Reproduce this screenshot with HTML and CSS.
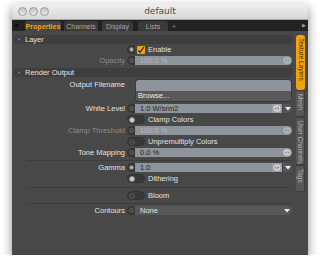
FILE: index.html
```html
<!DOCTYPE html>
<html lang="en">
<head>
    <meta charset="UTF-8">
    <title>default</title>
    <link rel="stylesheet" href="styles.css">
</head>
<body>
    <div class="window">
        <div class="titlebar">
            <div class="lights">
                <span class="light"></span>
                <span class="light"></span>
                <span class="light"></span>
            </div>
            <div class="title">default</div>
            <div></div>
        </div>

        <div class="tabbar">
            <span class="tab-arrow left">&#9664;</span>
            <span class="tab active t-props">Properties</span>
            <span class="tab t-chan">Channels</span>
            <span class="tab t-disp">Display</span>
            <span class="tab t-lists">Lists</span>
            <span class="tab-plus">+</span>
            <span class="tab-arrow right">&#9654;</span>
        </div>

        <div class="body">
            <div class="panel">
                <div class="section-head"><span class="tri">&#9660;</span>Layer</div>

                <div class="row">
                    <span class="label"></span>
                    <div class="ctl">
                        <span class="cap"><i class="dot"></i></span>
                        <span class="check">
                            <svg width="8" height="8" viewBox="0 0 8 8"><path d="M1.5 4.5 L3 6.3 L6.8 1.2" fill="none" stroke="#222" stroke-width="1.2"/></svg>
                        </span>
                        <span class="ctl-text">Enable</span>
                    </div>
                </div>

                <div class="row">
                    <span class="label dim">Opacity</span>
                    <div class="field">
                        <span class="cap"><i class="dot off"></i></span>
                        <span class="input dim">100.0 %</span>
                        <span class="spin"><svg width="8" height="7" viewBox="0 0 8 7"><ellipse cx="4" cy="3.5" rx="3.6" ry="3.2" fill="#b4bac0"/><path d="M3.4 1.5 L1.4 3.5 L3.4 5.5Z M4.6 1.5 L6.6 3.5 L4.6 5.5Z" fill="#8a9198"/></svg></span>
                    </div>
                </div>

                <div class="section-head gap"><span class="tri">&#9660;</span>Render Output</div>

                <div class="row file-row">
                    <span class="label">Output Filename</span>
                    <div class="file">
                        <span class="file-name"></span>
                        <span class="file-browse">Browse...</span>
                    </div>
                </div>

                <div class="row tight">
                    <span class="label">White Level</span>
                    <div class="field">
                        <span class="cap"><i class="dot off"></i></span>
                        <span class="input">1.0 W/srm2</span>
                        <span class="spin"><svg width="8" height="7" viewBox="0 0 8 7"><ellipse cx="4" cy="3.5" rx="3.6" ry="3.2" fill="#d4d8dc"/><path d="M3.4 1.5 L1.4 3.5 L3.4 5.5Z M4.6 1.5 L6.6 3.5 L4.6 5.5Z" fill="#8a9198"/></svg></span>
                        <span class="drop"><svg width="6" height="4" viewBox="0 0 6 4"><path d="M0 0 H6 L3 3.5Z" fill="#eee"/></svg></span>
                    </div>
                </div>

                <div class="row">
                    <span class="label"></span>
                    <div class="ctl">
                        <span class="toggle"><i class="knob on"></i></span>
                        <span class="ctl-text">Clamp Colors</span>
                    </div>
                </div>

                <div class="row">
                    <span class="label dim">Clamp Threshold</span>
                    <div class="field">
                        <span class="cap"><i class="dot off"></i></span>
                        <span class="input dim">100.0 %</span>
                        <span class="spin"><svg width="8" height="7" viewBox="0 0 8 7"><ellipse cx="4" cy="3.5" rx="3.6" ry="3.2" fill="#b4bac0"/><path d="M3.4 1.5 L1.4 3.5 L3.4 5.5Z M4.6 1.5 L6.6 3.5 L4.6 5.5Z" fill="#8a9198"/></svg></span>
                    </div>
                </div>

                <div class="row">
                    <span class="label"></span>
                    <div class="ctl">
                        <span class="toggle"><i class="knob"></i></span>
                        <span class="ctl-text">Unpremultiply Colors</span>
                    </div>
                </div>

                <div class="row">
                    <span class="label">Tone Mapping</span>
                    <div class="field">
                        <span class="cap"><i class="dot off"></i></span>
                        <span class="input">0.0 %</span>
                        <span class="spin"><svg width="8" height="7" viewBox="0 0 8 7"><ellipse cx="4" cy="3.5" rx="3.6" ry="3.2" fill="#d4d8dc"/><path d="M3.4 1.5 L1.4 3.5 L3.4 5.5Z M4.6 1.5 L6.6 3.5 L4.6 5.5Z" fill="#8a9198"/></svg></span>
                    </div>
                </div>

                <div class="sep"></div>

                <div class="row">
                    <span class="label">Gamma</span>
                    <div class="field">
                        <span class="cap"><i class="dot"></i></span>
                        <span class="input">1.0</span>
                        <span class="spin"><svg width="8" height="7" viewBox="0 0 8 7"><ellipse cx="4" cy="3.5" rx="3.6" ry="3.2" fill="#d4d8dc"/><path d="M3.4 1.5 L1.4 3.5 L3.4 5.5Z M4.6 1.5 L6.6 3.5 L4.6 5.5Z" fill="#8a9198"/></svg></span>
                        <span class="drop"><svg width="6" height="4" viewBox="0 0 6 4"><path d="M0 0 H6 L3 3.5Z" fill="#eee"/></svg></span>
                    </div>
                </div>

                <div class="row">
                    <span class="label"></span>
                    <div class="ctl">
                        <span class="toggle"><i class="knob on"></i></span>
                        <span class="ctl-text">Dithering</span>
                    </div>
                </div>

                <div class="sep wide"></div>

                <div class="row">
                    <span class="label"></span>
                    <div class="ctl">
                        <span class="toggle"><i class="knob"></i></span>
                        <span class="ctl-text">Bloom</span>
                    </div>
                </div>

                <div class="sep"></div>

                <div class="row">
                    <span class="label">Contours</span>
                    <div class="field">
                        <span class="cap"><i class="dot off"></i></span>
                        <span class="input dark">None</span>
                        <span class="drop dark"><svg width="6" height="4" viewBox="0 0 6 4"><path d="M0 0 H6 L3 3.5Z" fill="#eee"/></svg></span>
                    </div>
                </div>
            </div>

            <div class="side">
                <span class="vtab active texture">Texture Layers</span>
                <span class="vtab mesh">Mesh</span>
                <span class="vtab user">User Channels</span>
                <span class="vtab tags">Tags</span>
            </div>
        </div>
    </div>
</body>
</html>
```

FILE: styles.css
```css
:root {
    --panel: #484848;
    --head: #3e3e3e;
    --field: #8d949b;
    --orange: #f3a20d;
    --label: #e2e2e2;
    --dim: #8c8c8c;
}

* {
    margin: 0;
    padding: 0;
    box-sizing: border-box;
}

body {
    background: #ffffff;
    font-family: 'Liberation Sans', Arial, sans-serif;
    font-size: 7.5px;
    line-height: 1;
}

.window {
    margin: 4px 0 0 12px;
    width: 296px;
    height: 251px;
    display: flex;
    flex-direction: column;
    box-shadow: 0 4px 10px rgba(0,0,0,0.45);
}

/* title bar */
.titlebar {
    height: 16px;
    display: grid;
    grid-template-columns: 1fr auto 1fr;
    align-items: center;
    background: linear-gradient(#efefef, #d8d8d8);
    border-bottom: 1px solid #a8a8a8;
}

.lights {
    display: flex;
    gap: 2px;
    padding-left: 6px;
}

.light {
    width: 9px;
    height: 9px;
    border-radius: 50%;
    background: linear-gradient(#c4c4c4, #e8e8e8);
    border: 1px solid #9c9c9c;
}

.title {
    font-family: 'DejaVu Sans', sans-serif;
    font-size: 9px;
    color: #4a4a4a;
}

/* tab bar */
.tabbar {
    height: 11px;
    display: flex;
    align-items: flex-end;
    background: #222222;
    color: #a5a5a5;
    font-size: 7px;
}

.tab-arrow {
    font-size: 5px;
    align-self: center;
}

.tab-arrow.left {
    color: #050505;
    width: 13px;
    padding-left: 2px;
}

.tab-arrow.right {
    margin-left: auto;
    margin-right: 2px;
    color: #a0a0a0;
}

.tab {
    height: 10px;
    padding-top: 2px;
    text-align: center;
    white-space: nowrap;
    border-radius: 3px 3px 0 0;
    background: #3a3a3a;
}

.t-props { width: 36px; }
.t-chan { width: 34px; margin-left: 3px; }
.t-disp { width: 31px; margin-left: 4px; }
.t-lists { width: 30px; margin-left: 5px; }

.tab.active {
    color: var(--orange);
    font-weight: bold;
    background: #454545;
}

.tab-plus {
    padding: 0 0 1px 4px;
    color: #888;
}

/* body */
.body {
    flex: 1;
    display: flex;
    background: var(--panel);
}

.panel {
    flex: 1;
    padding: 4px 0 0 2px;
}

.section-head {
    height: 9px;
    display: flex;
    align-items: center;
    background: var(--head);
    border-radius: 3px;
    color: var(--label);
    font-size: 7.5px;
}

.section-head.gap {
    margin-top: 2px;
}

.tri {
    font-size: 4px;
    color: #8a8a8a;
    width: 11px;
    padding-left: 3px;
}

.row {
    height: 11px;
    display: grid;
    grid-template-columns: 111px 1fr;
    column-gap: 2px;
    align-items: center;
    padding-right: 1px;
}

.row.tight {
    margin-top: 1px;
}

.label {
    text-align: right;
    color: var(--label);
}

.dim {
    color: var(--dim);
}

.ctl {
    display: flex;
    align-items: center;
    gap: 2px;
    color: var(--label);
}

.ctl-text {
    padding-left: 1px;
}

.cap {
    width: 8px;
    height: 9px;
    display: flex;
    align-items: center;
    justify-content: center;
    background: #3a3a3a;
    border-radius: 4px 0 0 4px;
    border: 1px solid #333;
}

.dot {
    width: 5px;
    height: 5px;
    border-radius: 50%;
    background: #b8b8b8;
    border: 1px solid #666;
}

.dot.off {
    background: #474747;
    border-color: #5a5a5a;
}

.check {
    width: 8px;
    height: 8px;
    border-radius: 1px;
    background: var(--orange);
    display: flex;
}

.toggle {
    width: 18px;
    height: 9px;
    border-radius: 4.5px;
    background: #393939;
    border: 1px solid #333;
    display: flex;
    align-items: center;
    padding-left: 1px;
}

.knob {
    width: 6px;
    height: 6px;
    border-radius: 50%;
    background: #444;
    border: 1px solid #525252;
}

.knob.on {
    background: #d0d0d0;
    border-color: #888;
}

/* value fields */
.field {
    height: 9px;
    display: flex;
    align-items: stretch;
}

.field .cap {
    border-radius: 4.5px 0 0 4.5px;
}

.input {
    flex: 1;
    display: flex;
    align-items: center;
    padding-left: 5px;
    background: var(--field);
    color: #1f1f1f;
}

.input.dim {
    color: #b3b9bf;
}

.input.dark {
    background: #585858;
    color: #e0e0e0;
}

.spin {
    width: 10px;
    display: flex;
    align-items: center;
    justify-content: center;
    background: var(--field);
    border-radius: 0 4.5px 4.5px 0;
}

.drop {
    width: 10px;
    display: flex;
    align-items: center;
    justify-content: center;
    background: #565656;
    border-radius: 0 4.5px 4.5px 0;
    border-left: 1px solid #444;
}

.field .spin:has(+ .drop) {
    border-radius: 0;
    background: #9aa1a7;
}

.drop.dark {
    background: #585858;
    border-left: none;
}

/* output filename */
.file-row {
    height: 23px;
    margin-top: 2px;
}

.file {
    height: 23px;
    display: flex;
    flex-direction: column;
    margin-left: 8px;
    border-radius: 4px;
    overflow: hidden;
    border: 1px solid #3a3a3a;
}

.file-name {
    height: 11px;
    background: var(--field);
}

.file-browse {
    flex: 1;
    display: flex;
    align-items: center;
    padding-left: 2px;
    background: #595959;
    color: #eeeeee;
}

.label:has(+ .file) {
    align-self: start;
    padding-top: 2px;
}

.sep {
    height: 4px;
    margin-left: 13px;
    margin-right: 2px;
    display: flex;
    align-items: center;
}

.sep::before {
    content: '';
    flex: 1;
    height: 1px;
    background: #3c3c3c;
}

.sep.wide {
    height: 6px;
}

/* side tabs */
.side {
    width: 15px;
    padding: 4px 0 0 3px;
    display: flex;
    flex-direction: column;
}

.vtab {
    width: 9px;
    writing-mode: vertical-rl;
    font-size: 6.5px;
    display: flex;
    align-items: center;
    padding-top: 3px;
    background: #565656;
    color: #b5b5b5;
    border: 1px solid #3c3c3c;
    border-left: none;
    border-radius: 0 3px 3px 0;
}

.vtab.active {
    background: var(--orange);
    color: #3a2a00;
    border-radius: 3px;
    border: none;
}

.texture { height: 55px; }
.mesh { height: 27px; }
.user { height: 48px; }
.tags { height: 27px; }
```
